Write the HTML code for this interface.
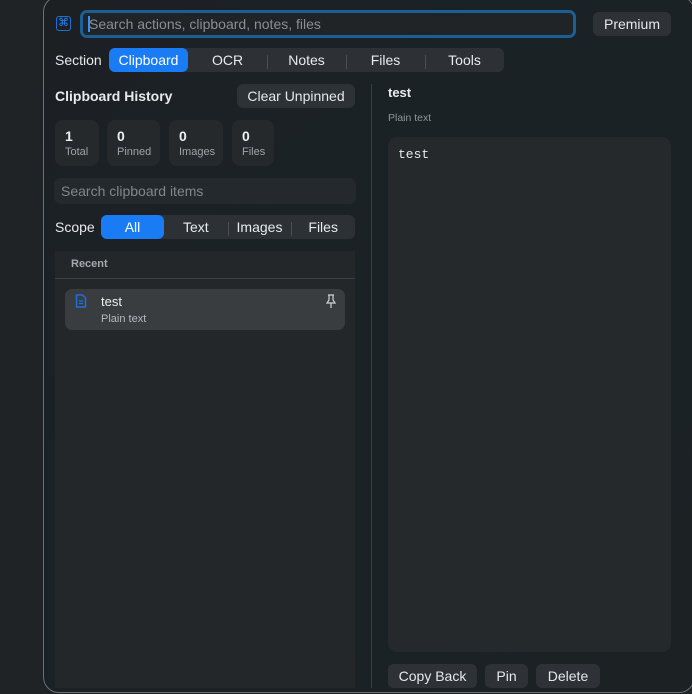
<!DOCTYPE html>
<html><head><meta charset="utf-8"><style>
*{box-sizing:border-box;margin:0;padding:0}
body{width:692px;height:694px;overflow:hidden;background:#1f2326;font-family:"Liberation Sans",sans-serif;color:#e8eaec;position:relative}
.win{position:absolute;left:43px;top:-4px;width:652px;height:697px;border:1px solid #6a7076;border-radius:16px;background:linear-gradient(135deg,#1c2023 0%,#1a2226 45%,#1c2124 100%);overflow:hidden}
.a{position:absolute}
.btn{position:absolute;background:#2e3236;border-radius:6px;color:#e6e8ea;font-size:14px;text-align:center}
.seg{position:absolute;background:#2d3135;border-radius:6px;display:flex;font-size:14px}
.seg div{flex:1;text-align:center;position:relative}
.seg .on{background:#1a7cf5;border-radius:6px;color:#fff}
.sep:before{content:"";position:absolute;left:0;top:7px;height:14px;width:1px;background:#4a4f54}
.stat{position:absolute;top:120px;height:46px;background:#25292c;border-radius:8px;padding:8px 10px}
.stat b{display:block;font-size:14px;color:#eee}
.stat span{display:block;font-size:11px;color:#a0a4a8;margin-top:2px}
</style></head><body>
<div class="win"></div>
<div class="a" style="left:56px;top:16px;width:15px;height:15px;border:1.5px solid #1f6fd8;border-radius:3px;color:#2a86ff;font-size:11px;line-height:12px;text-align:center">⌘</div>
<div class="a" style="left:80px;top:10px;width:496px;height:28px;border:3px solid #1c5f95;border-radius:7px;background:#202427"></div>
<div class="a" style="left:88px;top:16px;width:1.5px;height:16px;background:#3a8ef5"></div>
<div class="a" style="left:89px;top:16px;font-size:14px;color:#8a8f94">Search actions, clipboard, notes, files</div>
<div class="btn" style="left:593px;top:12px;width:78px;height:24px;line-height:24px">Premium</div>
<div class="a" style="left:55px;top:52px;font-size:14px">Section</div>
<div class="seg" style="left:109px;top:48px;width:395px;height:24px;line-height:24px">
<div class="on">Clipboard</div><div>OCR</div><div class="sep">Notes</div><div class="sep">Files</div><div class="sep">Tools</div></div>
<div class="a" style="left:55px;top:88px;font-size:14px;font-weight:bold">Clipboard History</div>
<div class="btn" style="left:237px;top:84px;width:118px;height:24px;line-height:24px">Clear Unpinned</div>
<div class="stat" style="left:55px;width:44px"><b>1</b><span>Total</span></div>
<div class="stat" style="left:107px;width:53px"><b>0</b><span>Pinned</span></div>
<div class="stat" style="left:169px;width:54px"><b>0</b><span>Images</span></div>
<div class="stat" style="left:232px;width:42px"><b>0</b><span>Files</span></div>
<div class="a" style="left:54px;top:178px;width:302px;height:26px;background:#25292c;border-radius:7px;padding-left:7px;line-height:26px;font-size:14px;color:#82878c">Search clipboard items</div>
<div class="a" style="left:55px;top:219px;font-size:14px">Scope</div>
<div class="seg" style="left:101px;top:215px;width:254px;height:24px;line-height:24px">
<div class="on" style="flex:0 0 63px">All</div><div>Text</div><div class="sep">Images</div><div class="sep">Files</div></div>
<div class="a" style="left:55px;top:251px;width:300px;height:437px;background:#23272a"></div>
<div class="a" style="left:71px;top:258px;font-size:11px;font-weight:bold;color:#a5a9ad">Recent</div>
<div class="a" style="left:55px;top:278px;width:300px;height:1px;background:#3a3f44"></div>
<div class="a" style="left:65px;top:289px;width:280px;height:41px;background:#3a3d40;border-radius:7px"></div>
<svg class="a" style="left:75px;top:294px" width="12" height="14" viewBox="0 0 12 14"><path d="M1.5 1h6l3 3v9h-9z" fill="none" stroke="#1f6fd8" stroke-width="1.5"/><path d="M4 7h4M4 9.5h4" stroke="#1f6fd8" stroke-width="1.2"/></svg>
<div class="a" style="left:101px;top:294px;font-size:13px;color:#eee">test</div>
<div class="a" style="left:101px;top:313px;font-size:11px;color:#b5b9bd">Plain text</div>
<svg class="a" style="left:325px;top:294px" width="12" height="15" viewBox="0 0 12 15"><path d="M3 1h6M4 1v5L2 9h8L8 6V1M6 9v5" fill="none" stroke="#cfd2d5" stroke-width="1.2"/></svg>
<div class="a" style="left:371px;top:84px;width:1px;height:604px;background:#3a3f44"></div>
<div class="a" style="left:388px;top:85px;font-size:13px;font-weight:bold">test</div>
<div class="a" style="left:388px;top:112px;font-size:10.5px;color:#8f9499">Plain text</div>
<div class="a" style="left:388px;top:137px;width:283px;height:515px;background:#25292c;border-radius:9px;padding:10px;font-family:'Liberation Mono',monospace;font-size:13px;color:#e8e8e8">test</div>
<div class="btn" style="left:388px;top:664px;width:89px;height:24px;line-height:24px">Copy Back</div>
<div class="btn" style="left:485px;top:664px;width:43px;height:24px;line-height:24px">Pin</div>
<div class="btn" style="left:536px;top:664px;width:64px;height:24px;line-height:24px">Delete</div>
</body></html>
